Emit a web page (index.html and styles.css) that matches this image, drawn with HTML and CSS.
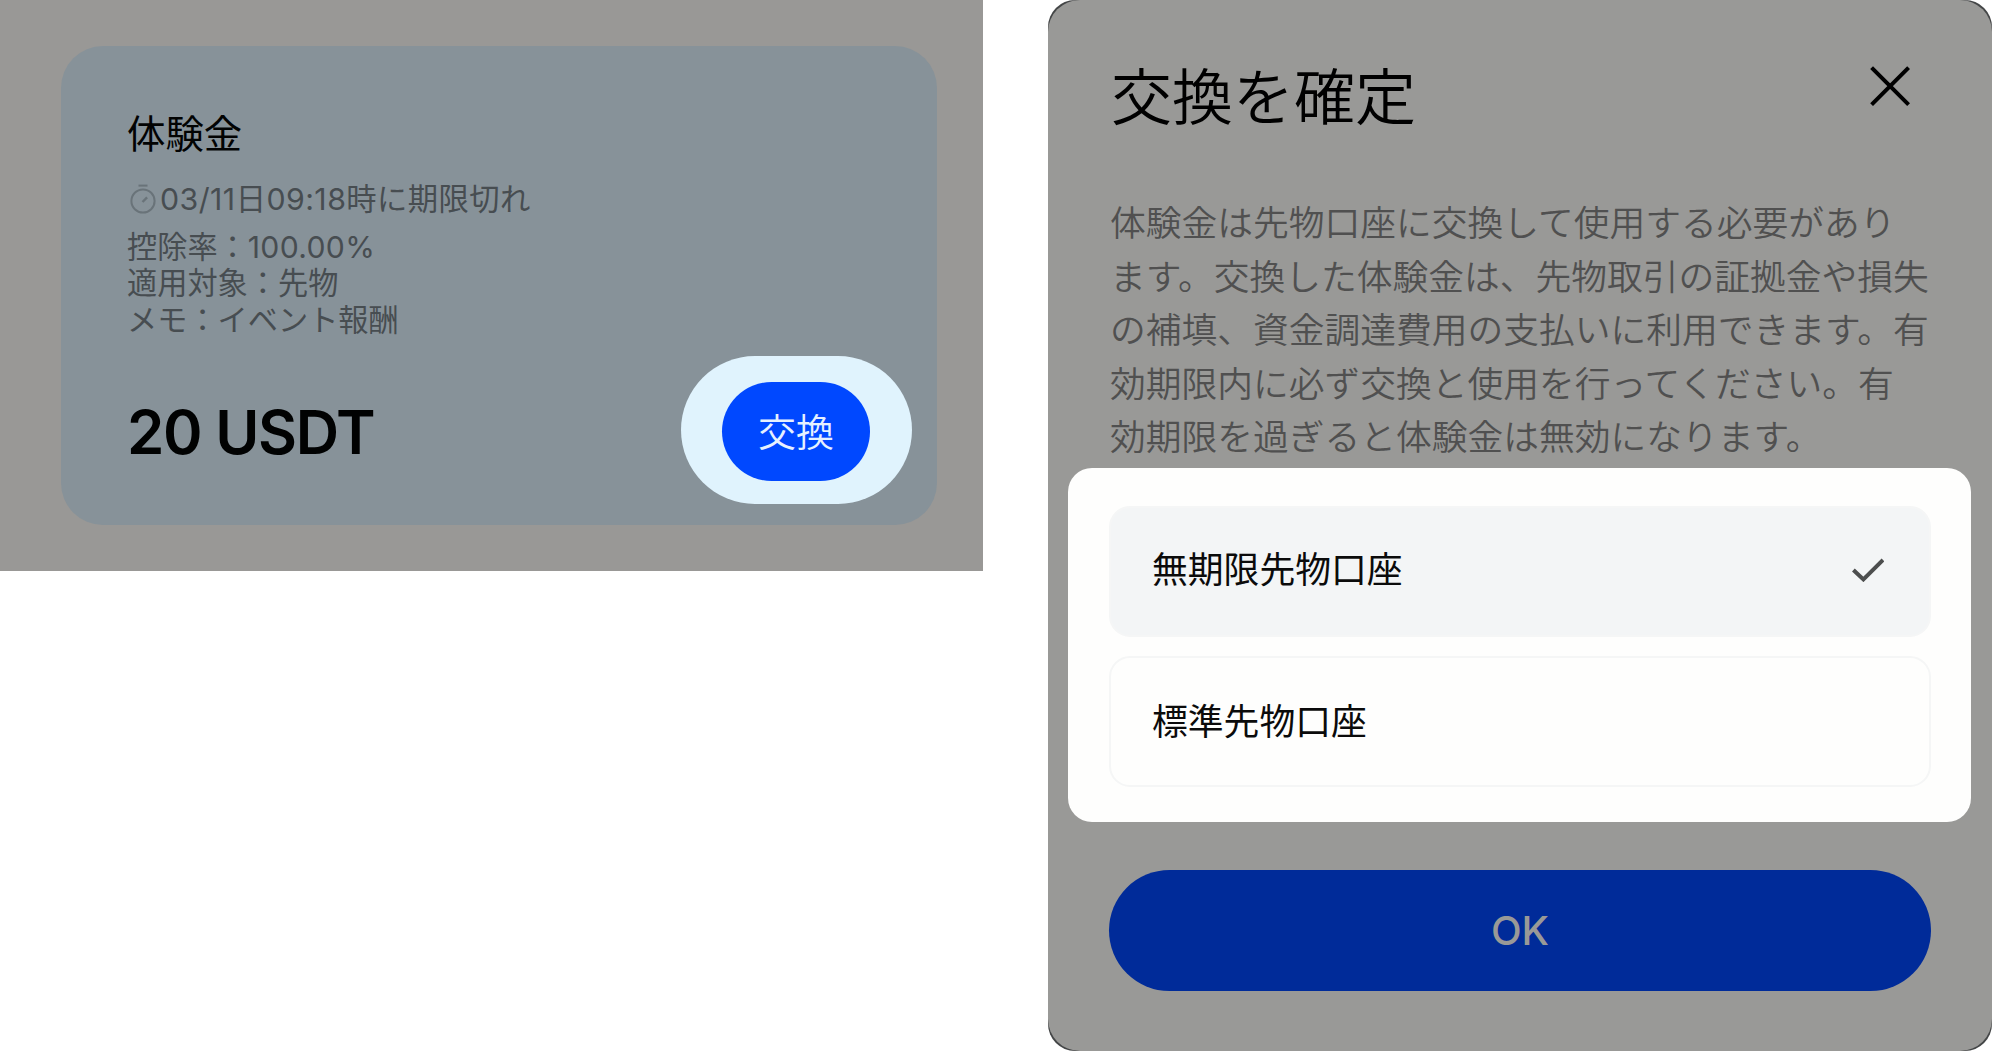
FILE: index.html
```html
<!DOCTYPE html>
<html lang="ja">
<head>
<meta charset="utf-8">
<title>体験金の交換</title>
<link rel="stylesheet" href="styles.css">
</head>
<body>
<main class="board">
  <section class="voucher-pane">
    <article class="voucher">
      <h2 class="voucher-title">体験金</h2>
      <p class="expiry">
        <svg class="timer" viewBox="0 0 26 30" fill="none" stroke="currentColor" stroke-width="2"><path d="M8.5 1.6h9"/><circle cx="13" cy="17" r="11.6"/><path d="M12.5 18l4.6-4.6" stroke-width="2.4"/></svg><span class="expiry-text">03/11日09:18時に期限切れ</span>
      </p>
      <ul class="details">
        <li>控除率：<span class="rate">100.00%</span></li>
        <li>適用対象：先物</li>
        <li>メモ：イベント報酬</li>
      </ul>
      <footer class="voucher-foot">
        <strong class="amount">20 USDT</strong>
        <div class="spotlight"><button class="redeem">交換</button></div>
      </footer>
    </article>
  </section>
  <section class="dialog-frame">
    <div class="dialog">
      <header class="dialog-head">
        <h1 class="dialog-title">交換を確定</h1>
        <svg class="close" viewBox="0 0 40 40" fill="none" stroke="currentColor" stroke-width="4"><path d="M1.6 1.6l37 37M38.6 1.6l-37 37"/></svg>
      </header>
      <p class="notice">体験金は先物口座に交換して使用する必要があり<br>ます。交換した体験金は、先物取引の証拠金や損失<br>の補填、資金調達費用の支払いに利用できます。有<br>効期限内に必ず交換と使用を行ってください。有<br>効期限を過ぎると体験金は無効になります。</p>
      <div class="choices">
        <div class="choice selected">
          <span>無期限先物口座</span>
          <svg class="check" viewBox="0 0 32 24" fill="none" stroke="currentColor" stroke-width="4"><path d="M1.4 12l10 9.4L31 2"/></svg>
        </div>
        <div class="choice"><span>標準先物口座</span></div>
      </div>
      <button class="ok">OK</button>
    </div>
  </section>
</main>
</body>
</html>
```
FILE: styles.css
```css
* { box-sizing: border-box; margin: 0; padding: 0; }
body {
  background: #fff;
  font-family: Inter, "Noto Sans CJK JP", sans-serif;
  overflow: hidden;
}
button { border: 0; font-family: inherit; }
.board {
  display: flex;
  justify-content: space-between;
  align-items: flex-start;
  width: 1992px;
  height: 1051px;
}
.voucher-pane {
  width: 983px;
  height: 571px;
  padding: 46px 46px 46px 61px;
  background: #999896;
}
.voucher {
  display: flex;
  flex-direction: column;
  height: 479px;
  padding: 64px 25px 21px 66px;
  border-radius: 42px;
  background: #879299;
  color: #474d51;
}
.voucher-title {
  color: #020303;
  font-size: 38.4px;
  font-weight: 400;
  line-height: 48px;
}
.expiry {
  display: flex;
  align-items: center;
  height: 40px;
  margin-top: 21px;
  padding-left: 3px;
  font-size: 30.3px;
  line-height: 40px;
  letter-spacing: .45px;
  white-space: nowrap;
}
.timer { width: 26px; height: 30px; margin-right: 4px; color: #697379; }
.details {
  margin-top: 10px;
  list-style: none;
  font-size: 30.2px;
  line-height: 36.3px;
}
.rate { letter-spacing: .3px; }
.voucher-foot {
  display: flex;
  justify-content: space-between;
  align-items: center;
  margin-top: auto;
}
.amount {
  padding-top: 3px;
  color: #010202;
  font-size: 60px;
  font-weight: 600;
  letter-spacing: -1.3px;
  white-space: nowrap;
}
.spotlight {
  width: 231px;
  height: 148px;
  padding: 26px 42px 23px 41px;
  border-radius: 74px;
  background: #e0f3fd;
}
.redeem {
  width: 148px;
  height: 99px;
  border-radius: 50px;
  background: #0048ff;
  color: #e6f1ff;
  font-size: 38px;
  font-weight: 350;
  line-height: 101px;
}
.dialog-frame {
  width: 944px;
  height: 1051px;
  border-radius: 27px;
  background: #444647;
}
.dialog {
  display: flex;
  flex-direction: column;
  height: 100%;
  padding: 0 20px;
  border-radius: 32px;
  background: #999997;
}
.dialog-head {
  display: flex;
  justify-content: space-between;
  padding: 55px 62px 0 43px;
}
.dialog-title { color: #000; font-family: Inter, "Noto Sans CJK JP DemiLight", "Noto Sans CJK JP", sans-serif; font-size: 61px; font-weight: 350; line-height: 86px; }
.close { width: 40px; height: 40px; margin-top: 11px; color: #000; }
.notice {
  height: 267px;
  margin-top: 56px;
  padding-left: 42px;
  color: #505050;
  font-family: Inter, "Noto Sans CJK JP DemiLight", "Noto Sans CJK JP", sans-serif;
  font-size: 35.75px;
  font-weight: 350;
  line-height: 53.6px;
  white-space: nowrap;
}
.choices {
  display: flex;
  flex-direction: column;
  gap: 19px;
  width: 903px;
  height: 354px;
  margin-top: 4px;
  padding: 38px 40px 35px 41px;
  border-radius: 24px;
  background: #fefefd;
}
.choice {
  display: flex;
  justify-content: space-between;
  align-items: center;
  height: 131px;
  padding: 0 45px 6px 41px;
  border: 2px solid #f5f6f6;
  border-radius: 21px;
  color: #0b0b0b;
  font-size: 35.8px;
}
.choice.selected { padding-bottom: 10px; background: #f3f5f6; }
.check { width: 32px; height: 24px; margin-top: 7px; color: #4c4e4e; }
.ok {
  width: 822px;
  height: 121px;
  margin: 48px 0 0 41px;
  border-radius: 61px;
  background: #002b99;
  color: #999997;
  font-size: 40px;
  font-weight: 500;
}
```
